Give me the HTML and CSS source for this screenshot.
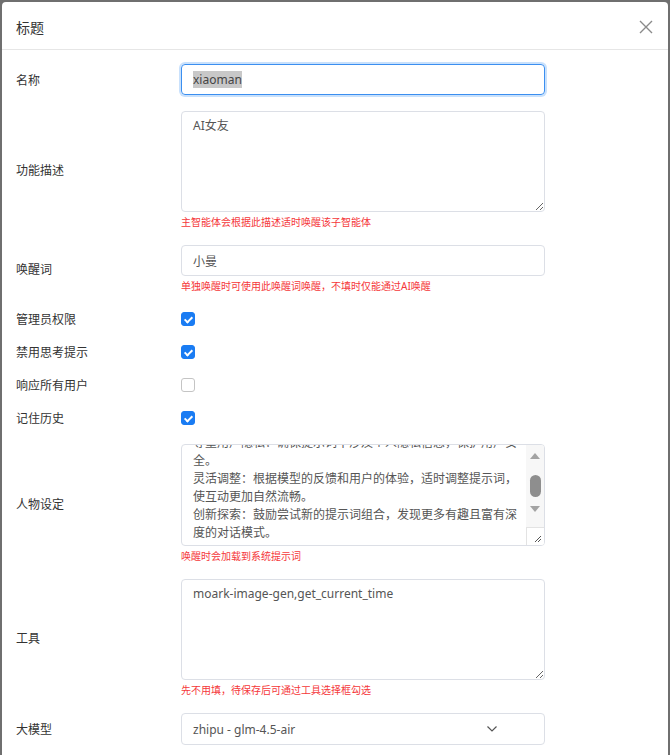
FILE: index.html
```html
<!DOCTYPE html>
<html>
<head>
	<meta charset="UTF-8">
	<title>标题</title>
	<link rel="stylesheet" href="styles.css">
</head>
<body>

<div class="modal">
	<div class="modal-header">
		<span class="modal-title">标题</span>
		<svg class="close" width="14" height="14" viewBox="0 0 14 14">
			<path d="M1 1 L13 13 M13 1 L1 13" stroke="#8a8a8a" stroke-width="1.4" fill="none"/>
		</svg>
	</div>

	<div class="modal-body">

		<div class="row">
			<div class="label">名称</div>
			<div class="control">
				<div class="input focused"><span class="selected">xiaoman</span></div>
			</div>
		</div>

		<div class="row">
			<div class="label">功能描述</div>
			<div class="control">
				<textarea class="textarea" rows="5">AI女友</textarea>
				<div class="help">主智能体会根据此描述适时唤醒该子智能体</div>
			</div>
		</div>

		<div class="row">
			<div class="label">唤醒词</div>
			<div class="control">
				<div class="input">小曼</div>
				<div class="help">单独唤醒时可使用此唤醒词唤醒，不填时仅能通过AI唤醒</div>
			</div>
		</div>

		<div class="checks">
			<div class="row check-row">
				<div class="label">管理员权限</div>
				<div class="control"><span class="checkbox checked"></span></div>
			</div>
			<div class="row check-row">
				<div class="label">禁用思考提示</div>
				<div class="control"><span class="checkbox checked"></span></div>
			</div>
			<div class="row check-row">
				<div class="label">响应所有用户</div>
				<div class="control"><span class="checkbox"></span></div>
			</div>
			<div class="row check-row">
				<div class="label">记住历史</div>
				<div class="control"><span class="checkbox checked"></span></div>
			</div>
		</div>

		<div class="row">
			<div class="label">人物设定</div>
			<div class="control">
				<div class="scroll-box">
					<div class="scroll-view">
						<div class="scroll-text">
							尊重用户隐私：确保提示词不涉及个人隐私信息，保护用户安<br>
							全。<br>
							灵活调整：根据模型的反馈和用户的体验，适时调整提示词，<br>
							使互动更加自然流畅。<br>
							创新探索：鼓励尝试新的提示词组合，发现更多有趣且富有深<br>
							度的对话模式。
						</div>
					</div>
					<div class="scrollbar">
						<span class="arrow up"></span>
						<span class="thumb"></span>
						<span class="arrow down"></span>
						<span class="corner">
							<svg width="8" height="8" viewBox="0 0 8 8">
								<path d="M7 1 L1 7 M7 4 L4 7" stroke="#555" stroke-width="1" fill="none"/>
							</svg>
						</span>
					</div>
				</div>
				<div class="help">唤醒时会加载到系统提示词</div>
			</div>
		</div>

		<div class="row">
			<div class="label">工具</div>
			<div class="control">
				<textarea class="textarea" rows="5">moark-image-gen,get_current_time</textarea>
				<div class="help">先不用填，待保存后可通过工具选择框勾选</div>
			</div>
		</div>

		<div class="row">
			<div class="label">大模型</div>
			<div class="control">
				<div class="select">
					<span>zhipu - glm-4.5-air</span>
					<svg width="12" height="8" viewBox="0 0 12 8">
						<path d="M1.5 1.5 L6 6 L10.5 1.5" stroke="#555" stroke-width="1.2" fill="none"/>
					</svg>
				</div>
			</div>
		</div>

	</div>
</div>

</body>
</html>
```

FILE: styles.css
```css
html, body {
	margin: 0;
	height: 100%;
}

body {
	background-color: #6f6f6f;
	font-family: "Noto Sans", "Noto Sans CJK SC", sans-serif;
	color: #333;
	overflow: hidden;
}

.modal {
	margin: 2px 2px 0 2px;
	height: calc(100% - 2px);
	background-color: #fff;
	border-radius: 4px 4px 0 0;
}

.modal-header {
	height: 47px;
	border-bottom: 1px solid #e6e6e6;
	display: flex;
	align-items: center;
	justify-content: space-between;
	padding: 0 15px 0 14px;
}

.modal-title {
	font-size: 14px;
	color: #333;
	padding-top: 2px;
}

.close {
	margin-top: 2px;
}

.modal-body {
	padding: 14px 0 0 14px;
	display: flex;
	flex-direction: column;
	gap: 16px;
}

.row {
	display: flex;
	align-items: center;
}

.label {
	width: 165px;
	font-size: 12px;
	color: #333;
}

.control {
	width: 364px;
	display: flex;
	flex-direction: column;
}

.input {
	box-sizing: border-box;
	height: 31px;
	border: 1px solid #dcdfe6;
	border-radius: 4px;
	padding: 0 11px;
	display: flex;
	align-items: center;
	font-size: 12px;
	color: #555;
}

.input.focused {
	border-color: #3b8ff0;
	box-shadow: 0 0 0 2px #c9e1fc;
}

.selected {
	background-color: #c8c8c8;
	color: #444;
}

.textarea {
	box-sizing: border-box;
	height: 101px;
	width: 364px;
	margin: 0;
	border: 1px solid #dcdfe6;
	border-radius: 4px;
	padding: 5px 11px;
	font-family: "Noto Sans", "Noto Sans CJK SC", sans-serif;
	font-size: 12px;
	line-height: 18px;
	color: #555;
	resize: vertical;
	outline: none;
}

.help {
	margin-top: 3px;
	font-size: 10px;
	line-height: 14px;
	color: #f5373a;
}

.checks {
	display: flex;
	flex-direction: column;
	gap: 13px;
}

.check-row {
	height: 20px;
}

.checkbox {
	box-sizing: border-box;
	display: block;
	width: 14px;
	height: 14px;
	border: 1px solid #c4c4c4;
	border-radius: 3px;
	background-color: #fff;
	position: relative;
}

.checkbox.checked {
	background-color: #1a7cf3;
	border-color: #1a7cf3;
}

.checkbox.checked::after {
	content: "";
	position: absolute;
	left: 4px;
	top: 1.5px;
	width: 3px;
	height: 6px;
	border: solid #fff;
	border-width: 0 2px 2px 0;
	transform: rotate(45deg);
}

.scroll-box {
	box-sizing: border-box;
	height: 102px;
	border: 1px solid #dcdfe6;
	border-radius: 4px;
	display: flex;
	overflow: hidden;
}

.scroll-view {
	flex: 1;
	overflow: hidden;
	padding: 0 0 0 11px;
}

.scroll-text {
	margin-top: -11px;
	font-size: 12px;
	line-height: 18px;
	color: #555;
	white-space: nowrap;
}

.scrollbar {
	width: 18px;
	background-color: #f7f7f7;
	display: flex;
	flex-direction: column;
	align-items: center;
}

.arrow {
	width: 0;
	height: 0;
	border-left: 5px solid transparent;
	border-right: 5px solid transparent;
}

.arrow.up {
	margin-top: 8px;
	border-bottom: 6px solid #a3a3a3;
}

.arrow.down {
	margin-top: 9px;
	border-top: 6px solid #a3a3a3;
}

.thumb {
	margin-top: 16px;
	width: 11px;
	height: 22px;
	border-radius: 6px;
	background-color: #8e8e8e;
}

.corner {
	box-sizing: border-box;
	margin-top: auto;
	width: 18px;
	height: 18px;
	background-color: #fff;
	border-top: 1px solid #e3e3e3;
	border-left: 1px solid #e3e3e3;
	display: flex;
	align-items: flex-end;
	justify-content: flex-end;
	padding: 0 2px 2px 0;
}

.select {
	box-sizing: border-box;
	height: 32px;
	border: 1px solid #dcdfe6;
	border-radius: 4px;
	padding: 0 46px 0 11px;
	display: flex;
	align-items: center;
	justify-content: space-between;
	font-size: 12px;
	color: #555;
}
```
